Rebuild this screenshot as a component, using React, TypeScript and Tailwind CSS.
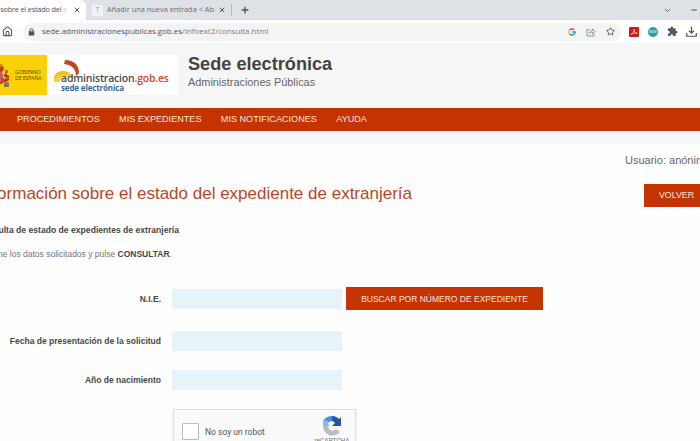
import React from 'react';
import { ChevronDown, House, Minus, Plus, Star, X } from 'lucide-react';

const sans = "font-['Liberation_Sans',Arial,sans-serif]";
const ui = "font-['Open_Sans','Noto_Sans',sans-serif]";

function GoogleMark() {
  return (
    <svg viewBox="0 0 20 20" className="size-2" fill="none" strokeWidth="3.6">
      <path d="M4 5.2A8 8 0 0 1 15.8 4.6" stroke="#ea4335" />
      <path d="M4 14.8A8 8 0 0 1 4 5.2" stroke="#fbbc05" />
      <path d="M15.4 15.6A8 8 0 0 1 4 14.8" stroke="#34a853" />
      <path d="M10 10H18A8 8 0 0 1 15.4 15.6" stroke="#4285f4" />
    </svg>
  );
}

function ShareMark() {
  return (
    <svg viewBox="0 0 20 20" className="size-[10px]" fill="none" stroke="#85898e" strokeWidth="1.7">
      <path d="M7 5H2v13h14v-4" />
      <path d="M6 13c.5-4 3-6 7-6V3.500l5.500 5.500-5.500 5v-3.500c-3 0-5 .5-7 2.500Z" />
    </svg>
  );
}

function LockMark() {
  return (
    <svg viewBox="0 0 14 16" className="h-[8px] w-[7px]">
      <path d="M4 7V4.500a3 3 0 0 1 6 0V7" fill="none" stroke="#505357" strokeWidth="2" />
      <path d="M1.500 6.500h11V15h-11Z" fill="#505357" />
    </svg>
  );
}

function ExtensionsMark() {
  return (
    <svg viewBox="0 0 24 24" className="size-[11px]" fill="#55585c">
      <path d="M20.500 11H19V7a2 2 0 0 0-2-2h-4V3.500a2.500 2.500 0 0 0-5 0V5H4a2 2 0 0 0-2 2v3.800h1.500a2.700 2.700 0 0 1 0 5.400H2V20a2 2 0 0 0 2 2h3.800v-1.500a2.700 2.700 0 0 1 5.400 0V22H17a2 2 0 0 0 2-2v-4h1.500a2.500 2.500 0 0 0 0-5Z" />
    </svg>
  );
}

function DownloadMark() {
  return (
    <svg viewBox="0 0 22 22" className="size-[11px]" fill="none" stroke="#505357" strokeWidth="2.4">
      <path d="M11 1v13M6 9.500l5 5 5-5M1.500 14v6.500h19V14" />
    </svg>
  );
}

function BrowserChrome() {
  return (
    <div className={`${ui} shrink-0 bg-white text-[#505357]`}>
      <div className="flex h-5 items-center bg-[#dee1e6] text-[7.400px]">
        <div className="flex h-5 w-[86px] shrink-0 items-center rounded-tr-md bg-white">
          <div className="flex w-[67px] shrink-0 justify-end overflow-hidden whitespace-nowrap tracking-[-0.22px]">
            <span>Información sobre el estado del <span className="text-gray-300">e</span></span>
          </div>
          <X className="ml-[6px] size-[8px] shrink-0" strokeWidth={3} />
        </div>
        <div className="ml-[6px] flex size-[11px] items-center justify-center bg-[#f1f2f4] text-[7px] text-gray-400">T</div>
        <div className="ml-[4px] w-[108px] shrink-0 overflow-hidden whitespace-nowrap text-[#6b6f74]">
          Añadir una nueva entrada &lt; Ab<span className="text-gray-400">o</span>
        </div>
        <X className="ml-[3px] size-[8px] shrink-0" strokeWidth={3} />
        <div className="ml-[5px] h-3 w-px bg-[#b5b9be]" />
        <Plus className="ml-[8px] size-[10px]" strokeWidth={3.2} />
        <ChevronDown className="ml-auto size-[9px]" strokeWidth={2.5} />
        <Minus className="ml-[18px] mr-[2px] size-2" strokeWidth={3} />
      </div>
      <div className="flex h-[23px] items-center">
        <House className="ml-[2px] size-[11px] shrink-0" strokeWidth={2.2} />
        <div className="ml-[10px] flex h-[18px] w-[598px] items-center rounded-full bg-[#f3f4f5] pl-[5px] pr-[6px] text-[7.950px]">
          <LockMark />
          <div className="ml-[7px] whitespace-nowrap">
            sede.administracionespublicas.gob.es<span className="text-[#777b80]">/infoext2/consulta.html</span>
          </div>
          <div className="ml-auto flex items-center gap-[10px]">
            <GoogleMark />
            <ShareMark />
            <Star className="size-[9px]" strokeWidth={2.4} />
          </div>
        </div>
        <div className="ml-[8px] flex items-center">
          <div className="flex size-[10px] items-center justify-center rounded-[1px] bg-[#c81f16]">
            <svg viewBox="0 0 20 20" className="size-2" fill="none" stroke="#ffe0dc" strokeWidth="1.8">
              <path d="M3 16c4-2 7-8 7-13 0 5 3 10 8 10-5-1-11 0-15 3Z" />
            </svg>
          </div>
          <div className="ml-[9px] flex size-[10px] items-center justify-center rounded-full bg-[#2f9da6]">
            <div className="h-[3px] w-[8px] bg-[#75c6cb]" />
          </div>
          <div className="ml-[9px]"><ExtensionsMark /></div>
          <div className="ml-[8px]"><DownloadMark /></div>
        </div>
      </div>
    </div>
  );
}

function SpainLogo() {
  return (
    <div className="flex h-10 w-[47px] shrink-0 items-center bg-[#fbd007]">
      <svg viewBox="0 0 12 40" className="h-10 w-3">
        <path d="M0 9h2l1 2-3 1Z" fill="#c58b22" />
        <path d="M0 12l3-1 1 3-2 3H0Z" fill="#c73b1e" />
        <path d="M0 17h2l1 4-1 6-2 2Z" fill="#b85b75" />
        <path d="M0 28c3 0 4-2 3-5" fill="none" stroke="#c83728" strokeWidth="2" />
        <path d="M5 15h3v3H7v9h2v4H4v-4h1Z" fill="#b97823" />
        <path d="M4 20l5 2M4 26l5-2" stroke="#b22d22" strokeWidth="2" />
        <path d="M4 29h5v3H4Z" fill="#75744c" />
      </svg>
      <div className={`ml-[3px] whitespace-nowrap text-[5.100px] leading-[6px] tracking-[-0.05px] text-[#54470b] ${ui}`}>
        <div>GOBIERNO</div>
        <div>DE ESPAÑA</div>
      </div>
    </div>
  );
}

function AdministrationLogo() {
  return (
    <div className="relative h-10 w-[131px] shrink-0 bg-white">
      <svg viewBox="0 0 131 40" className="absolute inset-0 size-full">
        <path d="M7 27c0-8 5-12 11-11 5 1 8 4 9 8-8-5-14-2-14 3Z" fill="#f7d02c" />
        <path d="M7 22c2-6 9-8 15-4l-2 2c-6-2-9 0-13 4Z" fill="#ecc422" />
        <path d="M18 5c9 0 14 5 14 13l-3 3c0-7-4-11-12-12Z" fill="#c94327" />
      </svg>
      <div className="relative ml-[14px] whitespace-nowrap pt-[17px] font-['Open_Sans','Noto_Sans',sans-serif]">
        <div className="h-[12px] text-[10.500px] leading-[12px] font-semibold tracking-[-0.2px] text-[#4b4949]">
          administracion<span className="text-[#c7492e]">.gob.es</span>
        </div>
        <div className="text-[8px] leading-[8px] font-bold tracking-[-0.15px] text-[#326a9e]">sede electrónica</div>
      </div>
    </div>
  );
}

function FormRow({ label, className, children }: { label: string; className: string; children?: React.ReactNode }) {
  return (
    <div className={`flex h-[23px] items-center ${className}`}>
      <label className="w-[161px] shrink-0 pt-px text-right text-[8.500px] font-bold whitespace-nowrap text-[#474747]">{label}</label>
      <div className="ml-[11px] h-5 w-[170px] shrink-0 bg-[#e6f3f8]" />
      {children}
    </div>
  );
}

function RecaptchaMark() {
  return (
    <svg viewBox="0 0 20 20" className="size-5">
      <path d="M2 4 6 7a6 6 0 0 1 4-2V0C6 0 4 1 2 4Z" fill="#4c8eea" />
      <path d="M10 0c3 0 5 1 7 3l2-2v9h-9l3-3c-1-1-2-2-3-2Z" fill="#2454a8" />
      <path d="M1 3v7h7L6 8c0-1 0-1 1-2Z" fill="#8db7e9" />
      <path d="M1 10c0 9 11 13 17 6l-4-3c-3 3-7 2-8-3Z" fill="#b8bdc4" />
    </svg>
  );
}

export default function App() {
  return (
    <div className={`flex h-[441px] w-[700px] flex-col overflow-hidden bg-[#fefefe] text-[#555] ${sans}`}>
      <BrowserChrome />
      <header className="flex h-[65px] shrink-0 items-start bg-[#f6f6f6] pt-[12px]">
        <SpainLogo />
        <AdministrationLogo />
        <div className="ml-[10px] whitespace-nowrap">
          <h1 className="-mt-px text-[18.150px] leading-[20px] font-bold text-[#444]">Sede electrónica</h1>
          <p className="text-[10.900px] leading-[16px] text-[#666]">Administraciones Públicas</p>
        </div>
      </header>
      <nav className="flex h-[23px] shrink-0 items-center gap-[19.400px] bg-[#c53300] pl-[17px] text-[9.100px] whitespace-nowrap text-[#ffe5d9]">
        <span>PROCEDIMIENTOS</span>
        <span>MIS EXPEDIENTES</span>
        <span>MIS NOTIFICACIONES</span>
        <span>AYUDA</span>
      </nav>
      <div className="h-[13px] shrink-0 bg-[#f5f7f8]" />
      <main>
        <div className="flex h-[32px] items-center pl-[625px] text-[11px] whitespace-nowrap text-[#666]">Usuario: anónimo</div>
        <div className="flex h-[35px] items-center">
          <div className="flex w-[412px] shrink-0 justify-end whitespace-nowrap">
            <h2 className="text-[17px] text-[#bd4526]">Información sobre el estado del expediente de extranjería</h2>
          </div>
          <button className="mt-[4px] ml-[232px] h-[23px] w-[65px] shrink-0 bg-[#c53300] pt-px text-[8.800px] text-[#ffe5d9]">VOLVER</button>
        </div>
        <div className="mt-[11px] flex h-[16px] w-[179px] items-center justify-end text-[8.600px] font-bold whitespace-nowrap text-[#474747]">
          <span>Consulta de estado de expedientes de extranjería</span>
        </div>
        <div className="mt-[8px] flex h-[16px] w-[172px] items-center justify-end text-[8.500px] whitespace-nowrap text-[#777]">
          <span>Rellene los datos solicitados y pulse <b className="text-[#474747]">CONSULTAR</b>.</span>
        </div>
        <form>
          <FormRow label="N.I.E." className="mt-[25px]">
            <button type="button" className="ml-[4px] h-[23px] w-[197px] bg-[#c53300] pt-px text-[8.500px] whitespace-nowrap text-[#ffe5d9]">
              BUSCAR POR NÚMERO DE EXPEDIENTE
            </button>
          </FormRow>
          <FormRow label="Fecha de presentación de la solicitud" className="mt-[19px]" />
          <FormRow label="Año de nacimiento" className="mt-[16px]" />
          <div className="mt-[18px] ml-[173px] flex h-[60px] w-[183px] items-start border border-[#dedede] bg-[#fafafa] pt-[13px] pl-[8px] shadow-sm">
            <div className="size-[17px] shrink-0 rounded-[1px] border border-[#bcbcbc] bg-white" />
            <span className="ml-[6px] mt-[3px] font-[Roboto,sans-serif] text-[8.500px] whitespace-nowrap text-[#555]">No soy un robot</span>
            <div className="-mt-[7px] ml-auto mr-[6px] flex w-[34px] shrink-0 flex-col items-center">
              <RecaptchaMark />
              <span className="mt-px font-[Roboto,sans-serif] text-[6.500px] leading-[9px] text-[#777]">reCAPTCHA</span>
            </div>
          </div>
        </form>
      </main>
    </div>
  );
}
